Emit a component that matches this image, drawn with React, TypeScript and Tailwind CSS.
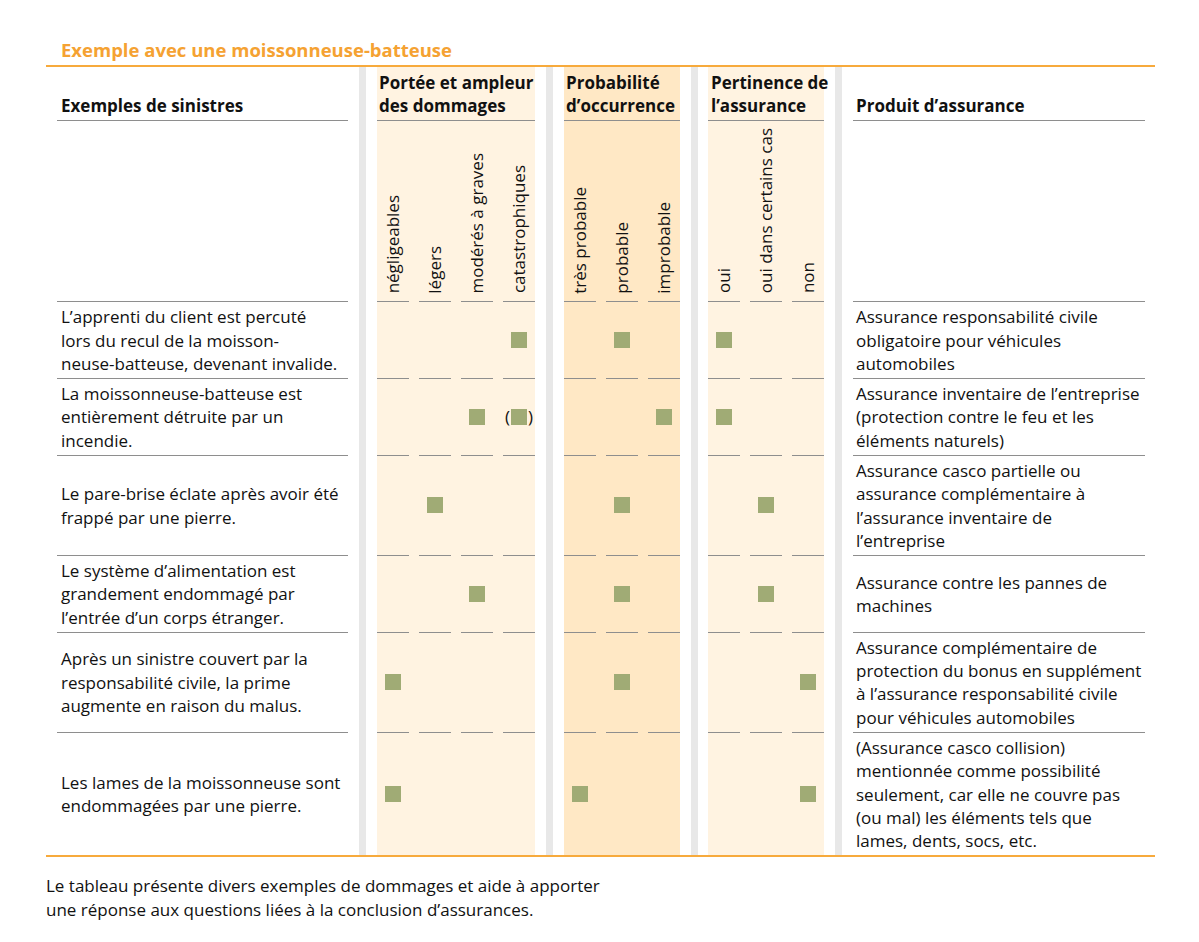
import { Fragment } from 'react';

// 0 = leer, 1 = Quadrat, 2 = Quadrat in Klammern
type Mark = 0 | 1 | 2;

type Row = {
  left: string[];
  dmg: Mark[];
  prob: Mark[];
  rel: Mark[];
  product: string[];
};

const rows: Row[] = [
  {
    left: ['L’apprenti du client est percuté', 'lors du recul de la moisson-', 'neuse-batteuse, devenant invalide.'],
    dmg: [0, 0, 0, 1],
    prob: [0, 1, 0],
    rel: [1, 0, 0],
    product: ['Assurance responsabilité civile', 'obligatoire pour véhicules', 'automobiles'],
  },
  {
    left: ['La moissonneuse-batteuse est', 'entièrement détruite par un', 'incendie.'],
    dmg: [0, 0, 1, 2],
    prob: [0, 0, 1],
    rel: [1, 0, 0],
    product: ['Assurance inventaire de l’entreprise', '(protection contre le feu et les', 'éléments naturels)'],
  },
  {
    left: ['Le pare-brise éclate après avoir été', 'frappé par une pierre.'],
    dmg: [0, 1, 0, 0],
    prob: [0, 1, 0],
    rel: [0, 1, 0],
    product: ['Assurance casco partielle ou', 'assurance complémentaire à', 'l’assurance inventaire de', 'l’entreprise'],
  },
  {
    left: ['Le système d’alimentation est', 'grandement endommagé par', 'l’entrée d’un corps étranger.'],
    dmg: [0, 0, 1, 0],
    prob: [0, 1, 0],
    rel: [0, 1, 0],
    product: ['Assurance contre les pannes de', 'machines'],
  },
  {
    left: ['Après un sinistre couvert par la', 'responsabilité civile, la prime', 'augmente en raison du malus.'],
    dmg: [1, 0, 0, 0],
    prob: [0, 1, 0],
    rel: [0, 0, 1],
    product: ['Assurance complémentaire de', 'protection du bonus en supplément', 'à l’assurance responsabilité civile', 'pour véhicules automobiles'],
  },
  {
    left: ['Les lames de la moissonneuse sont', 'endommagées par une pierre.'],
    dmg: [1, 0, 0, 0],
    prob: [1, 0, 0],
    rel: [0, 0, 1],
    product: ['(Assurance casco collision)', 'mentionnée comme possibilité', 'seulement, car elle ne couvre pas', '(ou mal) les éléments tels que', 'lames, dents, socs, etc.'],
  },
];

const LIGHT = 'bg-[#fff3e1]';
const DARK = 'bg-[#ffe8c5]';

function Lines({ lines }: { lines: string[] }) {
  return (
    <div className="whitespace-nowrap">
      {lines.map((l, i) => (
        <div key={i}>{l}</div>
      ))}
    </div>
  );
}

function Square() {
  return <div className="w-4 h-4 bg-[#a0ab75]" />;
}

function Sep() {
  return (
    <div className="flex justify-center">
      <div className="w-[7px] bg-[#e8e8e8]" />
    </div>
  );
}

function BandCells({ marks, bg, cols }: { marks: Mark[]; bg: string; cols: string }) {
  return (
    <div className={`${bg} grid ${cols} gap-x-[10px]`}>
      {marks.map((m, i) => (
        <div key={i} className="border-t border-[#8e8e8e] flex items-center justify-center">
          {m === 1 && <Square />}
          {m === 2 && (
            <span className="flex items-center gap-[1px]">
              (<Square />)
            </span>
          )}
        </div>
      ))}
    </div>
  );
}

function BandLabels({ labels, bg, cols }: { labels: string[]; bg: string; cols: string }) {
  return (
    <div className={`${bg} border-t border-[#8e8e8e] h-[181px] grid ${cols} gap-x-[10px]`}>
      {labels.map((l) => (
        <div key={l} className="flex justify-center items-end pb-[8px]">
          <span className="[writing-mode:vertical-rl] rotate-180 whitespace-nowrap">{l}</span>
        </div>
      ))}
    </div>
  );
}

export default function App() {
  const cols4 = 'grid-cols-[repeat(4,32px)]';
  const cols3 = 'grid-cols-[repeat(3,32px)]';

  return (
    <div className="min-h-screen bg-white text-[#111111] font-['Open_Sans',sans-serif] text-[17px] leading-[23.4px]">
      <div className="w-[1109px] ml-[46px] pt-[38px]">
        {/* Titel */}
        <h2 className="pl-[15px] text-[18.5px] leading-[23.5px] font-bold text-[#f5a232] mb-[3px]">
          Exemple avec une moissonneuse-batteuse
        </h2>
        <div className="h-[2px] bg-[#f7aa3c]" />

        {/* Tabelle */}
        <div className="pl-[11px] pr-[10px]">
          <div className="grid grid-cols-[291px_29px_158px_29px_116px_28px_116px_29px_292px]">
            {/* Kopfzeile */}
            <div className="flex items-end pl-[4px] pt-[4px] pb-[3px] font-bold">Exemples de sinistres</div>
            <Sep />
            <div className={`${LIGHT} flex items-end pl-[2px] pt-[4px] pb-[3px] font-bold`}>
              <Lines lines={['Portée et ampleur', 'des dommages']} />
            </div>
            <Sep />
            <div className={`${DARK} flex items-end pl-[2px] pt-[4px] pb-[3px] font-bold`}>
              <Lines lines={['Probabilité', 'd’occurrence']} />
            </div>
            <Sep />
            <div className={`${LIGHT} flex items-end pl-[3px] pt-[4px] pb-[3px] font-bold`}>
              <Lines lines={['Pertinence de', 'l’assurance']} />
            </div>
            <Sep />
            <div className="flex items-end pl-[3px] pt-[4px] pb-[3px] font-bold">Produit d’assurance</div>

            {/* Senkrechte Beschriftungen */}
            <div className="border-t border-[#8e8e8e]" />
            <Sep />
            <BandLabels bg={LIGHT} cols={cols4} labels={['négligeables', 'légers', 'modérés à graves', 'catastrophiques']} />
            <Sep />
            <BandLabels bg={DARK} cols={cols3} labels={['très probable', 'probable', 'improbable']} />
            <Sep />
            <BandLabels bg={LIGHT} cols={cols3} labels={['oui', 'oui dans certains cas', 'non']} />
            <Sep />
            <div className="border-t border-[#8e8e8e]" />

            {/* Datenzeilen */}
            {rows.map((r, i) => (
              <Fragment key={i}>
                <div className="border-t border-[#8e8e8e] flex items-center pl-[4px] pt-[3px] pb-[2.5px]">
                  <Lines lines={r.left} />
                </div>
                <Sep />
                <BandCells marks={r.dmg} bg={LIGHT} cols={cols4} />
                <Sep />
                <BandCells marks={r.prob} bg={DARK} cols={cols3} />
                <Sep />
                <BandCells marks={r.rel} bg={LIGHT} cols={cols3} />
                <Sep />
                <div className="border-t border-[#8e8e8e] flex items-center pl-[3px] pt-[3px] pb-[2.5px]">
                  <Lines lines={r.product} />
                </div>
              </Fragment>
            ))}
          </div>
        </div>
        <div className="h-[2px] bg-[#f7aa3c]" />

        {/* Legende */}
        <p className="mt-[17px] leading-[23.5px]">
          Le tableau présente divers exemples de dommages et aide à apporter
          <br />
          une réponse aux questions liées à la conclusion d’assurances.
        </p>
      </div>
    </div>
  );
}
